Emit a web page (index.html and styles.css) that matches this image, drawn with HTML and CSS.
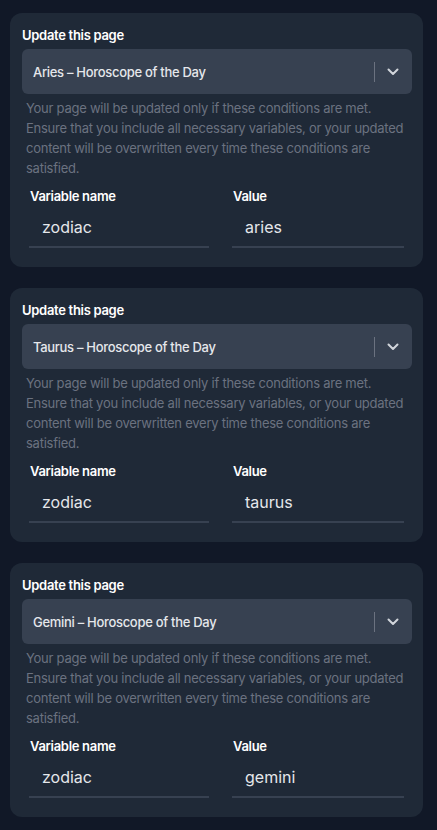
FILE: index.html
```html
<!DOCTYPE html>
<html lang="en">
<head>
<meta charset="utf-8">
<title>Update pages</title>
<link rel="stylesheet" href="styles.css">
</head>
<body>
<main class="list">
  <section class="card">
    <div class="title">Update this page</div>
    <div class="select">
      <span class="select-text">Aries – Horoscope of the Day</span>
      <span class="sep"></span>
      <svg class="chev" width="12" height="8" viewBox="0 0 12 8"><path d="M1.5 1.5 L6 6 L10.5 1.5" fill="none" stroke="#d1d5db" stroke-width="2" stroke-linecap="round" stroke-linejoin="round"/></svg>
    </div>
    <p class="desc">Your page will be updated only if these conditions are met. Ensure that you include all necessary variables, or your updated content will be overwritten every time these conditions are satisfied.</p>
    <div class="vars">
      <div class="field"><div class="label">Variable name</div><div class="input">zodiac</div></div>
      <div class="field"><div class="label">Value</div><div class="input">aries</div></div>
    </div>
  </section>
  <section class="card">
    <div class="title">Update this page</div>
    <div class="select">
      <span class="select-text">Taurus – Horoscope of the Day</span>
      <span class="sep"></span>
      <svg class="chev" width="12" height="8" viewBox="0 0 12 8"><path d="M1.5 1.5 L6 6 L10.5 1.5" fill="none" stroke="#d1d5db" stroke-width="2" stroke-linecap="round" stroke-linejoin="round"/></svg>
    </div>
    <p class="desc">Your page will be updated only if these conditions are met. Ensure that you include all necessary variables, or your updated content will be overwritten every time these conditions are satisfied.</p>
    <div class="vars">
      <div class="field"><div class="label">Variable name</div><div class="input">zodiac</div></div>
      <div class="field"><div class="label">Value</div><div class="input">taurus</div></div>
    </div>
  </section>
  <section class="card">
    <div class="title">Update this page</div>
    <div class="select">
      <span class="select-text">Gemini – Horoscope of the Day</span>
      <span class="sep"></span>
      <svg class="chev" width="12" height="8" viewBox="0 0 12 8"><path d="M1.5 1.5 L6 6 L10.5 1.5" fill="none" stroke="#d1d5db" stroke-width="2" stroke-linecap="round" stroke-linejoin="round"/></svg>
    </div>
    <p class="desc">Your page will be updated only if these conditions are met. Ensure that you include all necessary variables, or your updated content will be overwritten every time these conditions are satisfied.</p>
    <div class="vars">
      <div class="field"><div class="label">Variable name</div><div class="input">zodiac</div></div>
      <div class="field"><div class="label">Value</div><div class="input">gemini</div></div>
    </div>
  </section>
</main>
</body>
</html>
```
FILE: styles.css
```css
html, body {
  margin: 0;
  padding: 0;
  background: #111827;
}
body {
  font-family: Inter, "Noto Sans", "Liberation Sans", sans-serif;
  color: #fff;
}
.list {
  display: flex;
  flex-direction: column;
  gap: 21px;
  padding: 13px 14px 13px 10px;
}
.card {
  background: #1f2937;
  border-radius: 12px;
  padding: 12px 11px 19px 12px;
}
.title {
  font-size: 13px;
  font-weight: 600;
  line-height: 20px;
  letter-spacing: -0.3px;
  color: #ffffff;
}
.select {
  margin-top: 4px;
  height: 45px;
  background: #374151;
  border-radius: 6px;
  display: flex;
  align-items: center;
  padding: 0 13px 0 11px;
}
.select-text {
  flex: 1;
  font-size: 13px;
  font-weight: 500;
  color: #e5e7eb;
  letter-spacing: -0.3px;
}
.sep {
  width: 1px;
  height: 20px;
  background: #6b7280;
  margin-right: 12px;
}
.chev {
  display: block;
}
.desc {
  margin: 4px 0 0 4px;
  font-size: 13px;
  line-height: 20px;
  letter-spacing: -0.25px;
  color: #6b7280;
}
.vars {
  display: grid;
  grid-template-columns: 180px 172px;
  column-gap: 23px;
  padding: 0 0 0 7px;
  margin-top: 8px;
}
.label {
  font-size: 13px;
  font-weight: 600;
  line-height: 20px;
  letter-spacing: -0.3px;
  padding-left: 1px;
  color: #fff;
}
.input {
  height: 42px;
  box-sizing: border-box;
  border-bottom: 2px solid #374151;
  padding: 2px 0 0 13px;
  font-size: 16px;
  line-height: 38px;
  font-weight: 400;
  color: #e5e7eb;
}
```
